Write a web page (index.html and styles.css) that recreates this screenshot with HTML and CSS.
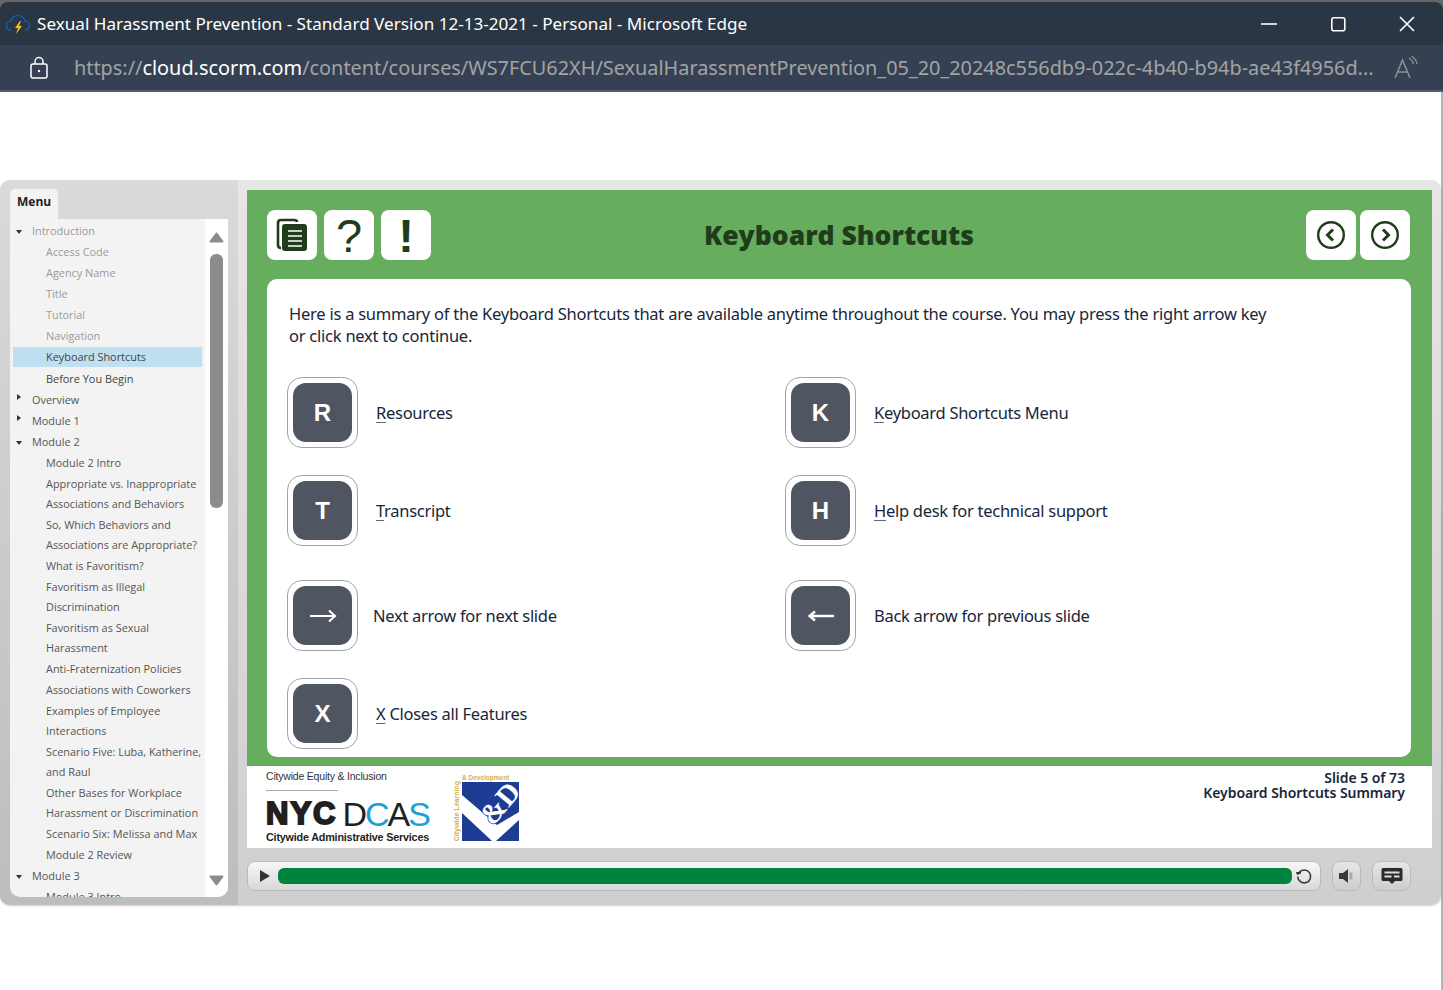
FILE: index.html
```html
<!DOCTYPE html>
<html lang="en">
<head>
  <meta charset="UTF-8" />
  <title>Sexual Harassment Prevention - Keyboard Shortcuts</title>
  <link rel="stylesheet" href="styles.css">
</head>
<body>

  <div class="janela">
    <div class="barra-titulo">
      <svg class="icone-app" width="26" height="26" viewBox="0 0 26 26">
        <path d="M6 19c-3 0-4.500-2-4.500-4.500S3.500 10 6 10c1-3.500 3.500-5.500 7-5.500s6.500 2.500 7 5.500c2.500 0 4.500 2 4.500 4.500S22.500 19 20 19" fill="none" stroke="#0f5f9c" stroke-width="1.600"/>
        <path d="M15 10l-5 7h3l-2 6 6-8h-3l2-5z" fill="#f5c518"/>
      </svg>
      <span class="titulo">Sexual Harassment Prevention - Standard Version 12-13-2021 - Personal - Microsoft Edge</span>
      <div class="botoes-janela">
        <svg width="18" height="18" viewBox="0 0 18 18"><path d="M1 9h16" stroke="#fff" stroke-width="1.600"/></svg>
        <svg width="18" height="18" viewBox="0 0 18 18"><rect x="2.800" y="2.800" width="13" height="13" rx="2" fill="none" stroke="#fff" stroke-width="1.600"/></svg>
        <svg width="18" height="18" viewBox="0 0 18 18"><path d="M2 2l14 14M16 2L2 16" stroke="#fff" stroke-width="1.600"/></svg>
      </div>
    </div>
    <div class="barra-url">
      <svg class="cadeado" width="20" height="24" viewBox="0 0 20 24">
        <rect x="2" y="8" width="16" height="14" rx="2" fill="none" stroke="#fff" stroke-width="1.500"/>
        <path d="M6 8V5.500a4 4 0 0 1 8 0V8" fill="none" stroke="#fff" stroke-width="1.500"/>
        <circle cx="10" cy="15" r="1.200" fill="#fff"/>
      </svg>
      <span class="url">https://<b>cloud.scorm.com</b>/content/courses/WS7FCU62XH/SexualHarassmentPrevention_05_20_20248c556db9-022c-4b40-b94b-ae43f4956d...</span>
      <svg class="leitura" width="26" height="24" viewBox="0 0 26 24">
        <path d="M1 22L8.500 4 16 22M4 16h9" fill="none" stroke="#8f8f8f" stroke-width="1.500"/>
        <path d="M15 2c2.500 1.500 4 3.500 4.500 6M17.500 0c3 2 5 4.500 5.500 8" fill="none" stroke="#8f8f8f" stroke-width="1.300"/>
      </svg>
    </div>
  </div>

  <div class="palco">
    <div class="player">

      <aside class="lateral">
        <div class="aba">Menu</div>
        <div class="painel">
          <ul class="arvore">
            <li class="n1 apagado aberto">Introduction</li>
            <li class="n2 apagado">Access Code</li>
            <li class="n2 apagado">Agency Name</li>
            <li class="n2 apagado">Title</li>
            <li class="n2 apagado">Tutorial</li>
            <li class="n2 apagado">Navigation</li>
            <li class="n2 atual">Keyboard Shortcuts</li>
            <li class="n2 escuro">Before You Begin</li>
            <li class="n1 fechado">Overview</li>
            <li class="n1 fechado">Module 1</li>
            <li class="n1 aberto">Module 2</li>
            <li class="n2">Module 2 Intro</li>
            <li class="n2">Appropriate vs. Inappropriate<br>Associations and Behaviors</li>
            <li class="n2">So, Which Behaviors and<br>Associations are Appropriate?</li>
            <li class="n2">What is Favoritism?</li>
            <li class="n2">Favoritism as Illegal<br>Discrimination</li>
            <li class="n2">Favoritism as Sexual<br>Harassment</li>
            <li class="n2">Anti-Fraternization Policies</li>
            <li class="n2">Associations with Coworkers</li>
            <li class="n2">Examples of Employee<br>Interactions</li>
            <li class="n2">Scenario Five: Luba, Katherine,<br>and Raul</li>
            <li class="n2">Other Bases for Workplace<br>Harassment or Discrimination</li>
            <li class="n2">Scenario Six: Melissa and Max</li>
            <li class="n2">Module 2 Review</li>
            <li class="n1 aberto">Module 3</li>
            <li class="n2">Module 3 Intro</li>
          </ul>
          <div class="rolagem">
            <svg width="15" height="11" viewBox="0 0 15 11"><path d="M7.500 1.500L13.500 9.500H1.500z" fill="#8c8c8c" stroke="#8c8c8c" stroke-width="2" stroke-linejoin="round"/></svg>
            <span class="polegar"></span>
            <svg class="seta-baixo" width="15" height="11" viewBox="0 0 15 11"><path d="M7.500 9.500L13.500 1.500H1.500z" fill="#8c8c8c" stroke="#8c8c8c" stroke-width="2" stroke-linejoin="round"/></svg>
          </div>
        </div>
      </aside>

      <main class="conteudo">
        <section class="slide">
          <header class="cabecalho">
            <div class="grupo-botoes">
              <div class="botao">
                <svg width="34" height="36" viewBox="0 0 34 36">
                  <path d="M6 31c-2 0-3-1-3-3V6c0-2 1-3 3-3h13c2 0 3 1 3 2" fill="none" stroke="#1f3d1a" stroke-width="2.600"/>
                  <rect x="7" y="7" width="25" height="27" rx="3" fill="#1f3d1a"/>
                  <path d="M13 14h14M13 19h14M13 24h14M13 29h14" stroke="#fff" stroke-width="1.600"/>
                </svg>
              </div>
              <div class="botao sinal">?</div>
              <div class="botao sinal exclama">!</div>
            </div>
            <h1>Keyboard Shortcuts</h1>
            <div class="grupo-nav">
              <div class="botao">
                <svg width="30" height="30" viewBox="0 0 30 30"><circle cx="15" cy="15" r="12.800" fill="none" stroke="#1f3d1a" stroke-width="2.400"/><path d="M17 9.500L11.500 15l5.500 5.500" fill="none" stroke="#1f3d1a" stroke-width="3"/></svg>
              </div>
              <div class="botao">
                <svg width="30" height="30" viewBox="0 0 30 30"><circle cx="15" cy="15" r="12.800" fill="none" stroke="#1f3d1a" stroke-width="2.400"/><path d="M13 9.500l5.500 5.500-5.500 5.500" fill="none" stroke="#1f3d1a" stroke-width="3"/></svg>
              </div>
            </div>
          </header>

          <div class="cartao">
            <p class="resumo">Here is a summary of the Keyboard Shortcuts that are available anytime throughout the course. You may press the right arrow key or click next to continue.</p>
            <div class="atalhos">
              <div class="atalho"><span class="tecla"><span class="miolo">R</span></span><span class="rotulo"><u>R</u>esources</span></div>
              <div class="atalho"><span class="tecla"><span class="miolo">K</span></span><span class="rotulo"><u>K</u>eyboard Shortcuts Menu</span></div>
              <div class="atalho"><span class="tecla"><span class="miolo">T</span></span><span class="rotulo"><u>T</u>ranscript</span></div>
              <div class="atalho"><span class="tecla"><span class="miolo">H</span></span><span class="rotulo"><u>H</u>elp desk for technical support</span></div>
              <div class="atalho folga">
                <span class="tecla"><span class="miolo">
                  <svg width="28" height="16" viewBox="0 0 28 16"><path d="M1 8h25M20 2.500L26 8l-6 5.500" fill="none" stroke="#fff" stroke-width="2.200"/></svg>
                </span></span>
                <span class="rotulo recuado">Next arrow for next slide</span>
              </div>
              <div class="atalho folga">
                <span class="tecla"><span class="miolo">
                  <svg width="28" height="16" viewBox="0 0 28 16"><path d="M27 8H3M8 3.500L2.500 8 8 12.500" fill="none" stroke="#fff" stroke-width="2.400"/></svg>
                </span></span>
                <span class="rotulo">Back arrow for previous slide</span>
              </div>
              <div class="atalho"><span class="tecla"><span class="miolo">X</span></span><span class="rotulo"><u>X</u> Closes all Features</span></div>
            </div>
          </div>
        </section>

        <footer class="rodape">
          <div class="logos">
            <div class="logo-dcas">
              <div class="logo-topo">Citywide Equity &amp; Inclusion</div>
              <div class="logo-marca"><span class="nyc">NYC</span><span class="dcas">D<i>C</i>A<i>S</i></span></div>
              <div class="logo-base">Citywide Administrative Services</div>
            </div>
            <div class="logo-ld">
              <span class="ld-vertical">Citywide Learning</span>
              <div>
                <span class="ld-topo">&amp; Development</span>
                <svg width="57" height="59" viewBox="0 0 57 59">
                  <rect width="57" height="59" fill="#1d3d94"/>
                  <path d="M0 13L35 43 57 30v8L34 59H30L0 31z" fill="#fff"/>
                  <text x="45.500" y="27.500" class="ld-letras" transform="rotate(-50 45.500 27.500)">&amp;D</text>
                </svg>
              </div>
            </div>
          </div>
          <div class="info-slide">
            <div>Slide 5 of 73</div>
            <div>Keyboard Shortcuts Summary</div>
          </div>
        </footer>

        <div class="controles">
          <div class="barra-progresso">
            <svg class="play" width="12" height="14" viewBox="0 0 12 14"><path d="M1 1l10 6-10 6z" fill="#333"/></svg>
            <div class="progresso"></div>
            <svg class="repetir" width="18" height="18" viewBox="0 0 18 18">
              <path d="M4 5.500a6.500 6.500 0 1 1-1.300 4" fill="none" stroke="#333" stroke-width="1.500"/>
              <path d="M1 5h5v1.500L2 8z" fill="#333"/>
            </svg>
          </div>
          <div class="botao-ctrl som">
            <svg width="16" height="16" viewBox="0 0 16 16">
              <path d="M0 5h4l5-4v14l-5-4H0z" fill="#3a3a3a"/>
              <rect x="10.500" y="4.500" width="3" height="7" fill="#aaa"/>
            </svg>
          </div>
          <div class="botao-ctrl legenda">
            <svg width="22" height="18" viewBox="0 0 22 18">
              <path d="M2 1h18a1.500 1.500 0 0 1 1.500 1.500v10A1.500 1.500 0 0 1 20 14h-6l-3 3-3-3H2a1.500 1.500 0 0 1-1.500-1.500v-10A1.500 1.500 0 0 1 2 1z" fill="#2b2b2b"/>
              <path d="M3.500 5.500h15M3.500 9.500h7M13 9.500h5.500" stroke="#ddd" stroke-width="1.800"/>
            </svg>
          </div>
        </div>
      </main>

    </div>
  </div>

</body>
</html>
```

FILE: styles.css
```css
* {
  box-sizing: border-box;
}
html, body {
  margin: 0;
  padding: 0;
  height: 990px;
  overflow: hidden;
  background-color: #fff;
}
body {
  font-family: "Open Sans", sans-serif;
}

/* janela do navegador */
.janela {
  padding-top: 2px;
  background-color: #666;
}
.barra-titulo {
  display: flex;
  align-items: center;
  height: 43px;
  padding-left: 5px;
  background-color: #2b3644;
  border-radius: 8px 8px 0 0;
  color: #fff;
}
.icone-app {
  flex: none;
}
.titulo {
  margin-left: 6px;
  font-family: "Noto Sans", sans-serif;
  font-size: 17.100px;
  white-space: nowrap;
}
.botoes-janela {
  display: flex;
  gap: 51px;
  margin-left: auto;
  margin-right: 27px;
}
.barra-url {
  display: flex;
  align-items: center;
  height: 47px;
  padding-left: 29px;
  background-color: #354153;
  border-bottom: 2px solid #55606f;
  color: #a3a3a3;
}
.cadeado {
  flex: none;
}
.url {
  margin-left: 25px;
  font-family: "Noto Sans", sans-serif;
  font-size: 19.860px;
  white-space: nowrap;
}
.url b {
  font-weight: 400;
  color: #fff;
}
.leitura {
  margin-left: 20px;
  flex: none;
}

/* player */
.palco {
  height: 898px;
  padding-top: 88px;
  background-color: #fff;
  border-right: 2px solid #b4b4b4;
}
.player {
  display: flex;
  width: 1441px;
  height: 725px;
  border-radius: 10px;
  overflow: hidden;
  background: linear-gradient(#e6e6e6, #cfcfcf);
  box-shadow: 0 1px 2px rgba(0,0,0,0.2);
}
.lateral {
  width: 238px;
  flex: none;
  padding: 9px 10px 8px;
  background: linear-gradient(#dadada, #bdbdbd);
}
.aba {
  width: 48px;
  height: 30px;
  padding-left: 7px;
  line-height: 26px;
  font-size: 12px;
  font-weight: 700;
  color: #222;
  background-color: #f3f3f3;
  border-radius: 5px 5px 0 0;
}
.painel {
  display: flex;
  height: 678px;
  background-color: #f3f3f3;
  border-radius: 0 0 10px 10px;
  overflow: hidden;
}
.arvore {
  list-style: none;
  width: 195px;
  height: 678px;
  margin: 0;
  padding: 2px 0 0 3px;
  font-size: 10.900px;
  color: #555;
  overflow: hidden;
}
.arvore li {
  position: relative;
  width: 189px;
  padding-bottom: 1px;
  line-height: 20px;
  white-space: nowrap;
}
.n1 {
  padding-left: 19px;
}
.n2 {
  padding-left: 33px;
}
.apagado {
  color: #9a9a9a;
}
.escuro {
  color: #444;
}
.arvore .atual {
  margin-bottom: 2px;
  padding-bottom: 0;
  color: #444;
  background-color: #bfe0f0;
}
.aberto::before {
  content: "";
  position: absolute;
  left: 3px;
  top: 9px;
  border-left: 3.500px solid transparent;
  border-right: 3.500px solid transparent;
  border-top: 4px solid #333;
}
.fechado::before {
  content: "";
  position: absolute;
  left: 4px;
  top: 4px;
  border-top: 3.500px solid transparent;
  border-bottom: 3.500px solid transparent;
  border-left: 4px solid #333;
}
.rolagem {
  display: flex;
  flex-direction: column;
  align-items: center;
  width: 23px;
  height: 678px;
  padding: 13px 0 11px;
  background-color: #fff;
}
.rolagem svg {
  flex: none;
}
.seta-baixo {
  margin-top: auto;
}
.polegar {
  width: 13px;
  height: 254px;
  margin-top: 11px;
  background-color: #8c8c8c;
  border-radius: 6px;
}

/* slide */
.conteudo {
  flex: 1;
  padding: 10px 9px 0 9px;
}
.slide {
  height: 576px;
  padding: 20px 21px 9px 20px;
  background-color: #66ad5e;
}
.cabecalho {
  display: flex;
  align-items: center;
  height: 50px;
  padding-right: 1px;
}
.cabecalho h1 {
  flex: 1;
  margin: 0;
  padding-right: 59px;
  text-align: center;
  font-family: "Open Sans", sans-serif;
  font-size: 26.500px;
  font-weight: 800;
  color: #1f3d1a;
}
.grupo-botoes {
  display: flex;
  gap: 7px;
}
.grupo-nav {
  display: flex;
  gap: 4px;
}
.botao {
  display: flex;
  align-items: center;
  justify-content: center;
  width: 50px;
  height: 50px;
  background-color: #fff;
  border-radius: 8px;
}
.sinal {
  font-family: "Liberation Sans", sans-serif;
  font-size: 47px;
  color: #1f3d1a;
}
.exclama {
  font-weight: 700;
}
.cartao {
  height: 478px;
  margin-top: 19px;
  padding: 24px 20px 0 20px;
  background-color: #fff;
  border-radius: 10px;
  color: #17263a;
}
.resumo {
  width: 990px;
  margin: 0 0 30px 2px;
  font-family: "Noto Sans", sans-serif;
  font-size: 16.500px;
  letter-spacing: -0.240px;
  line-height: 22px;
}
.atalhos {
  display: grid;
  grid-template-columns: 498px 1fr;
  row-gap: 27px;
}
.atalho {
  display: flex;
  align-items: center;
}
.folga {
  margin-top: 7px;
}
.tecla {
  display: flex;
  align-items: center;
  justify-content: center;
  width: 71px;
  height: 71px;
  flex: none;
  background-color: #fff;
  border: 1.500px solid #a0a4aa;
  border-radius: 15px;
}
.miolo {
  display: flex;
  align-items: center;
  justify-content: center;
  width: 59px;
  height: 59px;
  background-color: #4f5662;
  border-radius: 13px;
  font-family: "Liberation Sans", sans-serif;
  font-size: 24px;
  font-weight: 700;
  color: #fff;
}
.rotulo {
  margin-left: 18px;
  font-family: "Noto Sans", sans-serif;
  font-size: 16.500px;
  letter-spacing: -0.280px;
}
.recuado {
  margin-left: 15px;
}
.rotulo u {
  text-decoration-color: #667;
  text-underline-offset: 3px;
}

/* rodape */
.rodape {
  display: flex;
  justify-content: space-between;
  height: 82px;
  padding-right: 27px;
  background-color: #fff;
}
.logos {
  display: flex;
  gap: 22px;
  padding-left: 19px;
}
.logo-dcas {
  width: 165px;
}
.logo-topo {
  height: 25px;
  padding-top: 4px;
  font-family: "Liberation Sans", sans-serif;
  font-size: 10.500px;
  letter-spacing: -0.200px;
  color: #333;
  background: linear-gradient(#aaa, #aaa) no-repeat 0 100% / 72px 1px;
}
.logo-marca {
  display: flex;
  align-items: center;
  gap: 5px;
  height: 32px;
  margin-top: 7px;
}
.nyc {
  font-family: "Liberation Sans", sans-serif;
  font-size: 31px;
  font-weight: 700;
  letter-spacing: 2px;
  color: #231f20;
  -webkit-text-stroke: 2px #231f20;
}
.dcas {
  font-family: "Liberation Sans", sans-serif;
  font-size: 34px;
  letter-spacing: -2px;
  color: #231f20;
}
.dcas i {
  font-style: normal;
  color: #1a9fd6;
}
.logo-base {
  margin-top: 1px;
  font-family: "Liberation Sans", sans-serif;
  font-size: 10.800px;
  font-weight: 700;
  letter-spacing: -0.200px;
  color: #231f20;
}
.logo-ld {
  display: flex;
  align-items: flex-end;
  gap: 2px;
  height: 75px;
  padding-top: 8px;
  color: #d8ae4a;
}
.ld-vertical {
  writing-mode: vertical-rl;
  transform: rotate(180deg);
  font-family: "Liberation Sans", sans-serif;
  font-size: 7px;
  font-weight: 700;
  white-space: nowrap;
}
.ld-topo {
  display: block;
  font-family: "Liberation Sans", sans-serif;
  font-size: 6.500px;
  font-weight: 700;
  line-height: 8px;
  white-space: nowrap;
}
.logo-ld svg {
  display: block;
}
.ld-letras {
  font-family: "Liberation Serif", serif;
  font-size: 29px;
  font-weight: 700;
  fill: #fff;
  stroke: #1d3d94;
  stroke-width: 1.500px;
  paint-order: stroke;
  text-anchor: middle;
}
.info-slide {
  padding-top: 4px;
  font-family: "Noto Sans", sans-serif;
  font-size: 14px;
  font-weight: 600;
  letter-spacing: -0.050px;
  line-height: 15px;
  text-align: right;
  color: #17263a;
}

/* controles */
.controles {
  display: flex;
  align-items: center;
  gap: 11px;
  height: 57px;
  padding-bottom: 2px;
}
.barra-progresso {
  display: flex;
  align-items: center;
  width: 1074px;
  height: 30px;
  padding-left: 11px;
  background: linear-gradient(#f7f7f7, #d8d8d8);
  border: 1px solid #bbb;
  border-radius: 8px;
}
.play {
  flex: none;
}
.progresso {
  width: 1014px;
  height: 16px;
  margin-left: 7px;
  background-color: #00833d;
  border-radius: 6px;
}
.repetir {
  margin-left: 3px;
  flex: none;
}
.botao-ctrl {
  display: flex;
  align-items: center;
  justify-content: center;
  height: 30px;
  background: linear-gradient(#e6e6e6, #cdcdcd);
  border: 1px solid #bbb;
  border-radius: 8px;
}
.som {
  width: 29px;
}
.legenda {
  width: 39px;
}
```
